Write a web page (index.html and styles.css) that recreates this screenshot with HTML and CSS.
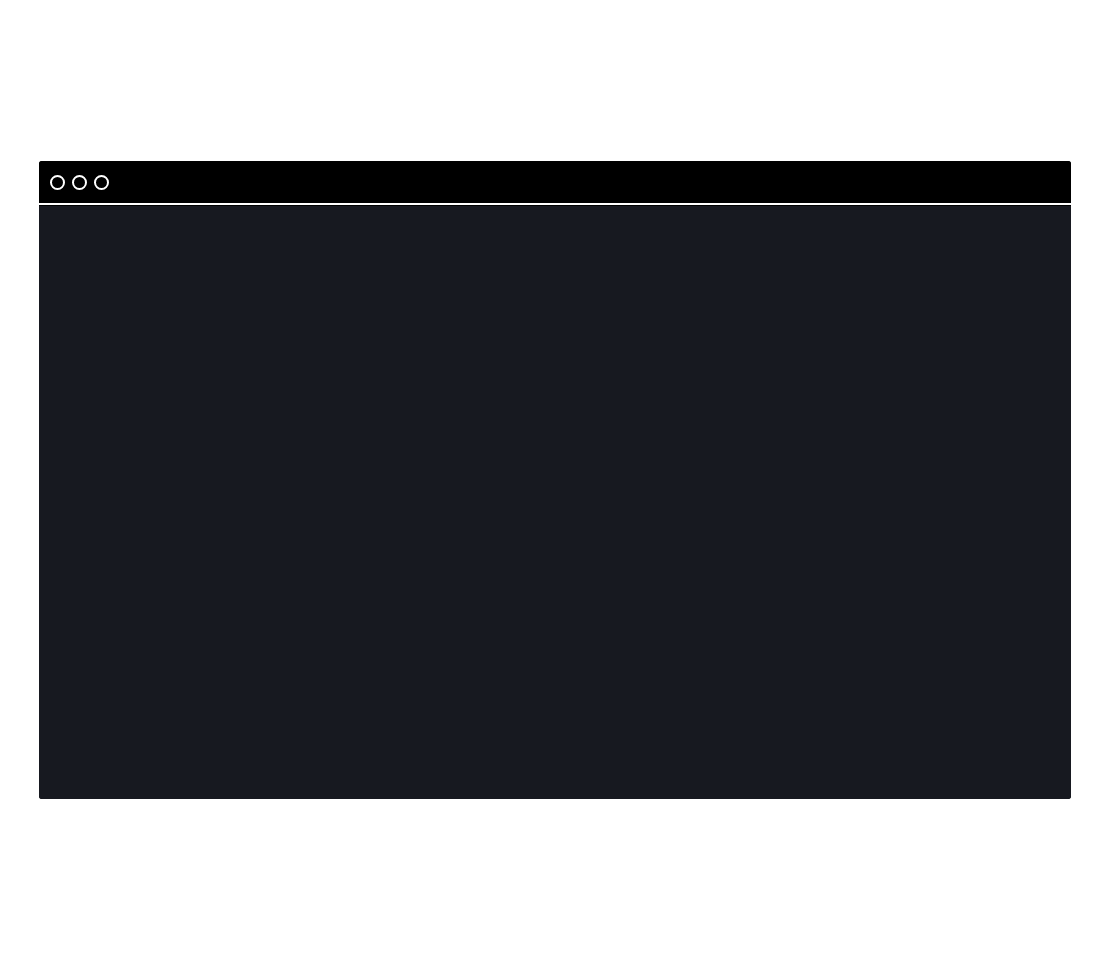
FILE: index.html
```html
<!DOCTYPE html>
<html>
<head>
<meta charset="utf-8">
<link rel="stylesheet" href="styles.css">
</head>
<body>
<div class="page">
  <div class="window">
    <div class="titlebar">
      <span class="dot"></span>
      <span class="dot"></span>
      <span class="dot"></span>
    </div>
    <div class="content"></div>
  </div>
</div>
</body>
</html>
```
FILE: styles.css
```css
html, body {
  margin: 0;
  padding: 0;
  background: #ffffff;
  font-family: "Liberation Sans", Arial, sans-serif;
}
.page {
  padding: 161px 39px 0 39px;
}
.window {
  width: 1032px;
  height: 638px;
  border-radius: 3px;
  overflow: hidden;
  background: #000;
  display: flex;
  flex-direction: column;
}
.titlebar {
  height: 44px;
  background: #000;
  border-bottom: 2px solid #ffffff;
  display: flex;
  align-items: center;
  gap: 7px;
  padding-left: 11px;
  padding-top: 1px;
  box-sizing: border-box;
  flex: none;
}
.dot {
  width: 15px;
  height: 15px;
  border: 2px solid #ffffff;
  border-radius: 50%;
  box-sizing: border-box;
}
.content {
  flex: 1;
  background: #171920;
  border-top: 1px solid #000;
}
```
